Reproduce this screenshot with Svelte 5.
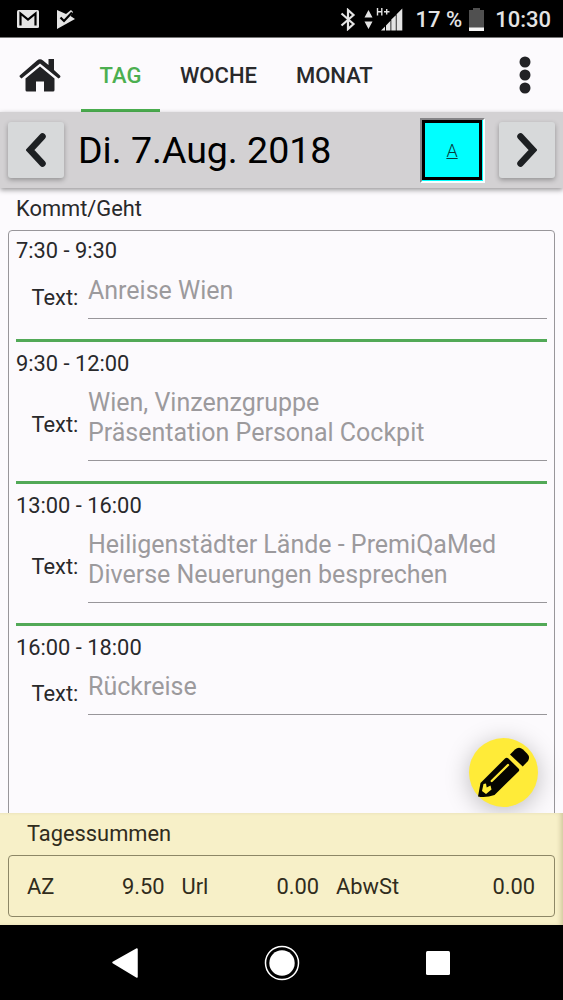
<script>
  const tabs = ['TAG', 'WOCHE', 'MONAT'];
  const entries = [
    { time: '7:30 - 9:30', lines: ['Anreise Wien'] },
    { time: '9:30 - 12:00', lines: ['Wien, Vinzenzgruppe', 'Präsentation Personal Cockpit'] },
    { time: '13:00 - 16:00', lines: ['Heiligenstädter Lände - PremiQaMed', 'Diverse Neuerungen besprechen'] },
    { time: '16:00 - 18:00', lines: ['Rückreise'] }
  ];
  const sums = [
    { label: 'AZ', value: '9.50' },
    { label: 'Url', value: '0.00' },
    { label: 'AbwSt', value: '0.00' }
  ];
</script>

<div class="screen">
  <div class="status">
    <svg class="mail" width="22" height="18" viewBox="0 0 22 18"><rect width="22" height="18" rx="1.5" fill="#e4e4e4" /><path d="M3.500 15.500V3.500L11 9.500L18.500 3.500V15.500" fill="none" stroke="#000" stroke-width="2.200" /></svg>
    <svg class="play" width="20" height="21" viewBox="0 0 20 21"><path d="M1 1L10 5L15 1L17 3L14.500 7L19 10L1 20Z" fill="#e4e4e4" /><path d="M4.500 8.500L8 12L16 3.500" fill="none" stroke="#000" stroke-width="2.200" /></svg>
    <span class="spacer"></span>
    <svg class="bt" width="16" height="23" viewBox="0 0 16 23"><path d="M1.500 5.500L13.500 16L8 21V2L13.500 7L1.500 17.500" fill="none" stroke="#e4e4e4" stroke-width="2.200" /></svg>
    <svg class="signal" width="40" height="24" viewBox="0 0 40 24">
      <path d="M.5 10.500L4.500 3L8.500 10.500ZM.5 14.500L4.500 22L8.500 14.500Z" fill="#e4e4e4" />
      <path d="M13.500 1V8.500M17.800 1V8.500M13.500 4.700H17.800M20 4.700H25.500M22.700 2V7.500" fill="none" stroke="#e4e4e4" stroke-width="1.400" />
      <path d="M17 23.500L21 19.500V23.500ZM22 18.500L26.500 13.700V23.500H22ZM27.300 12.500L31.800 8.200V23.500H27.300ZM32.600 7.200L38.300 1.500V23.500H32.600Z" fill="#e4e4e4" />
    </svg>
    <span class="percent">17 %</span>
    <svg class="battery" width="15" height="23" viewBox="0 0 15 23"><path d="M4 0H11V2H15V23H0V2H4Z" fill="#505050" /><path d="M0 19.500H15V23H0Z" fill="#f5f5f5" /></svg>
    <span class="clock">10:30</span>
  </div>

  <nav class="tabs">
    <svg class="home" width="42" height="34" viewBox="0 0 42 34"><path d="M29.500 1H35V12L41 17.500Q42 18.500 41 19.500L39.500 20.500L21 5.500L2.500 20.500L.8 19Q0 18 1 17.200L18 2.500Q21 0 24 2.500L29.500 7Z" fill="#222225" /><path d="M21 8.500L35.500 20.500V32Q35.500 33.500 34 33.500H25V23.500H17V33.500H8Q6.500 33.500 6.500 32V20.500Z" fill="#222225" /></svg>
    {#each tabs as tab, i}
      <button class="tab tab{i}" class:active={i === 0}><span>{tab}</span></button>
    {/each}
    <span class="spacer"></span>
    <svg class="more" width="12" height="38" viewBox="0 0 12 38"><circle cx="6" cy="6" r="5.500" /><circle cx="6" cy="19" r="5.500" /><circle cx="6" cy="32" r="5.500" /></svg>
  </nav>

  <header class="datebar">
    <button class="arrow"><svg width="20" height="34" viewBox="0 0 20 34"><path d="M16.500 3.500L4 17L16.500 30.500" /></svg></button>
    <h1>Di. 7.Aug. 2018</h1>
    <div class="badge"><span>A</span></div>
    <button class="arrow"><svg width="20" height="34" viewBox="0 0 20 34"><path d="M3.500 3.500L16 17L3.500 30.500" /></svg></button>
  </header>

  <main>
    <h2><span>Kommt/Geht</span></h2>
    <div class="list">
      {#each entries as entry}
        <section>
          <div class="time"><span>{entry.time}</span></div>
          <div class="row">
            <label>Text:</label>
            <div class="field">
              {#each entry.lines as line}
                <div class="line"><span>{line}</span></div>
              {/each}
            </div>
          </div>
        </section>
      {/each}
    </div>
    <button class="fab">
      <svg width="69" height="69" viewBox="0 0 69 69">
        <path d="M9 58.500L11.500 45L36 20.500Q37.700 18.800 39.400 20.500L49.500 30.500Q51 32 49.500 33.500L25.500 57Q17 60 9 58.500Z" fill="#050500" />
        <path d="M41 16.500L46 11.500Q50 8 54 11.500L58 15.500Q61.500 19 59 23L53.700 28.500Z" fill="#050500" />
        <path d="M22.700 43L39 27" fill="none" stroke="#ffeb38" stroke-width="2.400" stroke-linecap="round" />
        <path d="M14.500 46L13 53L17 56L22.500 51.500L21.500 47.500L17.700 49.500L17 45.500Z" fill="#ffeb38" />
      </svg>
    </button>
  </main>

  <footer>
    <h3>Tagessummen</h3>
    <div class="sums">
      {#each sums as sum, i}
        <div class="sum sum{i}"><span>{sum.label}</span><span class="value">{sum.value}</span></div>
      {/each}
    </div>
  </footer>

  <div class="android">
    <svg width="28" height="32" viewBox="0 0 28 32"><path d="M2 15.500L26 2V30Z" fill="#fff" stroke="#fff" stroke-width="1.500" stroke-linejoin="round" /></svg>
    <svg class="circle" width="36" height="36" viewBox="0 0 36 36"><circle cx="18" cy="18" r="16.500" fill="none" stroke="#fff" stroke-width="1.500" /><circle cx="18" cy="18" r="12.700" fill="#fff" /></svg>
    <svg width="24" height="24" viewBox="0 0 24 24"><rect width="24" height="24" rx="1.500" fill="#fff" /></svg>
  </div>
</div>

<style>
  :global(body) { margin: 0; }
  .screen { width: 563px; height: 1000px; display: flex; flex-direction: column; overflow: hidden; background: #fcfafd; color: #29292b; font: 21.850px/30px Roboto, sans-serif; }
  * { box-sizing: border-box; }
  button { border: 0; padding: 0; margin: 0; background: none; font: inherit; color: inherit; }
  h1, h2, h3 { margin: 0; font-weight: 400; }
  svg { display: block; flex: none; }
  span { white-space: nowrap; }
  .spacer { flex: 1; }
  .status { flex: none; height: 38px; background: #000; border-bottom: 1px solid #777; display: flex; align-items: center; color: #e4e4e4; font-size: 22px; font-weight: 500; padding: 1px 12px 0 17px; }
  .status span { padding-top: 2px; }
  .play { margin-left: 17px; }
  .bt { margin-right: 8px; }
  .signal { margin-right: 11px; }
  .percent { margin-right: 7px; }
  .battery { margin-right: 11px; }
  .tabs { flex: none; height: 74px; display: flex; align-items: center; padding: 0 32px 0 19px; font-size: 22px; font-weight: 500; }
  .home { margin-right: 20px; }
  .tab { height: 74px; border-bottom: 3px solid transparent; padding-top: 5px; text-align: left; }
  .tab0 { width: 79px; text-align: center; margin-right: 20px; }
  .tab1 { margin-right: 39px; }
  .tab.active { color: #4caf50; border-color: #4caf50; }
  .more { fill: #222225; }
  .datebar { flex: none; height: 76px; background: #d3d1d3; box-shadow: 0 2px 5px rgba(0, 0, 0, .4); display: flex; align-items: center; padding: 0 8px; position: relative; z-index: 1; }
  .arrow { width: 56px; height: 56px; background: #d7d9da; border-radius: 3px; box-shadow: 0 2px 5px rgba(0, 0, 0, .3); display: grid; place-items: center; }
  .arrow path { fill: none; stroke: #1d2022; stroke-width: 6.500; stroke-linecap: round; }
  h1 { flex: 1; padding-left: 14px; font-size: 37.500px; line-height: 50px; color: #000; white-space: nowrap; }
  .badge { width: 65px; height: 65px; margin-right: 14.500px; border: 2px solid; border-color: #858487 #f5ffff #f5ffff #858487; background: #0ff; display: flex; padding: 0 1px 1px 0; }
  .badge span { flex: 1; border: 3px solid #000; display: grid; place-items: center; font-size: 18px; font-weight: 300; text-decoration: underline; text-decoration-thickness: 1px; text-underline-offset: 1px; color: #083b3b; padding: 2px 0 0 1px; }
  main { flex: 1; min-height: 0; overflow: hidden; position: relative; padding: 0 8px; }
  h2 { font-size: 21.850px; line-height: 42px; height: 42px; padding-left: 8px; }
  .list { height: 640px; border: 1px solid #98969a; border-radius: 4px; padding: 0 7px; }
  section { border-bottom: 3px solid #52a957; }
  section:last-child { border: 0; }
  .time { height: 40px; line-height: 43px; }
  section:first-child .time { height: 39px; line-height: 39px; }
  .row { display: flex; align-items: center; padding: 5px 0 20px; }
  label { width: 72px; padding: 2px 0 0 15.500px; white-space: nowrap; }
  .field { flex: 1; border-bottom: 1px solid #98969a; padding-top: 1px; padding-bottom: 12px; font-size: 25px; color: #9c9a9d; }
  .line { height: 30px; }
  .fab { position: absolute; left: 469px; top: 549.500px; width: 69px; height: 69px; border-radius: 50%; background: #ffeb38; box-shadow: 0 4px 24px rgba(0, 0, 0, .25); }
  footer { flex: none; height: 112px; background: #f7f0c8; box-shadow: inset -4px 0 5px -2px rgba(110, 100, 50, .3); padding: 0 8px; color: #302c1c; }
  h3 { font-size: 21.850px; line-height: 41px; height: 42px; padding-left: 19px; }
  .sums { height: 62px; border: 1px solid #8d8766; border-radius: 4px; display: flex; align-items: center; padding: 2px 19px 0 18px; gap: 17px; }
  .sum { display: flex; justify-content: space-between; }
  .sum0, .sum1 { width: 137.500px; }
  .sum2 { flex: 1; }
  .android { flex: none; height: 75px; background: #000; display: flex; align-items: center; justify-content: space-between; padding: 0 113px 0 111px; }
  .circle { margin-right: 2px; }
</style>
